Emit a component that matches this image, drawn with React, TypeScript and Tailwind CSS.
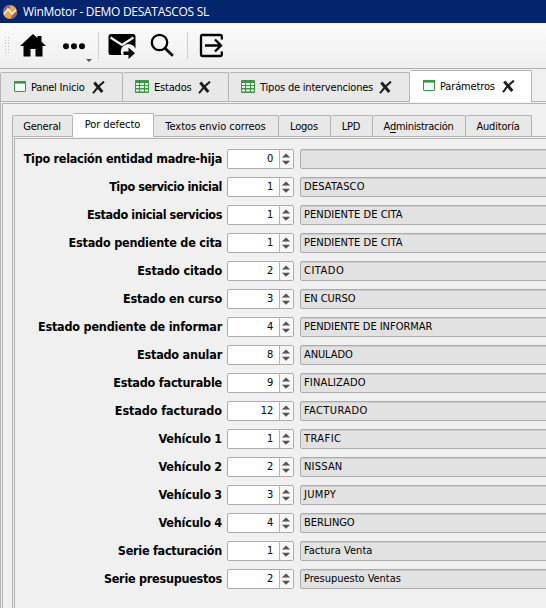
import type { ReactNode } from "react";

const rows = [
  { label: "Tipo relación entidad madre-hija", value: 0, text: "", labelTracking: "tracking-[-0.27px]", textTracking: "" },
  { label: "Tipo servicio inicial", value: 1, text: "DESATASCO", labelTracking: "tracking-[-0.44px]", textTracking: "tracking-[0.15px]" },
  { label: "Estado inicial servicios", value: 1, text: "PENDIENTE DE CITA", labelTracking: "tracking-[-0.4px]", textTracking: "tracking-[0.03px]" },
  { label: "Estado pendiente de cita", value: 1, text: "PENDIENTE DE CITA", labelTracking: "tracking-[-0.2px]", textTracking: "tracking-[0.03px]" },
  { label: "Estado citado", value: 2, text: "CITADO", labelTracking: "tracking-[-0.12px]", textTracking: "tracking-[0.5px]" },
  { label: "Estado en curso", value: 3, text: "EN CURSO", labelTracking: "tracking-[-0.15px]", textTracking: "tracking-[-0.05px]" },
  { label: "Estado pendiente de informar", value: 4, text: "PENDIENTE DE INFORMAR", labelTracking: "tracking-[-0.2px]", textTracking: "tracking-[-0.04px]" },
  { label: "Estado anular", value: 8, text: "ANULADO", labelTracking: "tracking-[-0.2px]", textTracking: "tracking-[-0.1px]" },
  { label: "Estado facturable", value: 9, text: "FINALIZADO", labelTracking: "tracking-[-0.2px]", textTracking: "tracking-[0.15px]" },
  { label: "Estado facturado", value: 12, text: "FACTURADO", labelTracking: "tracking-[-0.08px]", textTracking: "tracking-[0.4px]" },
  { label: "Vehículo 1", value: 1, text: "TRAFIC", labelTracking: "tracking-[-0.2px]", textTracking: "tracking-[0.45px]" },
  { label: "Vehículo 2", value: 2, text: "NISSAN", labelTracking: "tracking-[-0.2px]", textTracking: "tracking-[0.2px]" },
  { label: "Vehículo 3", value: 3, text: "JUMPY", labelTracking: "tracking-[-0.2px]", textTracking: "tracking-[0.35px]" },
  { label: "Vehículo 4", value: 4, text: "BERLINGO", labelTracking: "tracking-[-0.2px]", textTracking: "tracking-[-0.08px]" },
  { label: "Serie facturación", value: 1, text: "Factura Venta", labelTracking: "tracking-[-0.26px]", textTracking: "tracking-[0.05px]" },
  { label: "Serie presupuestos", value: 2, text: "Presupuesto Ventas", labelTracking: "tracking-[-0.26px]", textTracking: "tracking-[-0.03px]" },
];

const innerTabs: { name: ReactNode; width: string; active?: boolean }[] = [
  { name: "General", width: "w-[61px]" },
  { name: "Por defecto", width: "w-[81px] tracking-[-0.05px]", active: true },
  { name: "Textos envio correos", width: "w-[125px] tracking-[-0.02px]" },
  { name: "Logos", width: "w-[52px]" },
  { name: "LPD", width: "w-[42px]" },
  { name: <>A<span className="underline underline-offset-2">d</span>ministración</>, width: "w-[93px] tracking-[-0.3px]" },
  { name: "Auditoría", width: "w-[66px]" },
];

function WindowIcon() {
  return (
    <svg width="12" height="11" viewBox="0 0 12 11" className="mb-[2px] shrink-0">
      <rect x="0.5" y="0.5" width="11" height="10" rx="0.5" fill="#f4f8f4" stroke="#3c9447" />
      <path d="M0 0h12v2.6H0z" fill="#3c9447" />
    </svg>
  );
}

function GridIcon() {
  return (
    <svg width="14" height="13" viewBox="0 0 14 13" className="mb-[2px] shrink-0">
      <rect width="14" height="13" rx="1" fill="#3c9447" />
      <path d="M1 3h3v2H1zM5 3h4v2H5zM10 3h3v2h-3zM1 6h3v2H1zM5 6h4v2H5zM10 6h3v2h-3zM1 9.500h3v2H1zM5 9.500h4v2H5zM10 9.500h3v2h-3z" fill="#e6f2e6" />
    </svg>
  );
}

function CloseIcon() {
  return (
    <svg width="13" height="13" viewBox="0 0 13 13" className="shrink-0" fill="none" stroke="#1d1d1d">
      <path d="M2.300 1.600 10.300 10.900" strokeWidth="3" />
      <path d="M12 .6Q6 5 1 12.200" strokeWidth="2" />
    </svg>
  );
}

function OuterTab({ icon, name, className }: { icon: ReactNode; name: string; className: string }) {
  return (
    <div className={`flex h-[29px] shrink-0 items-center rounded-t-[2px] border-t border-r border-[#b4b4b4] bg-[#e8e8e8] ${className}`}>
      {icon}
      <span className="flex-1 pt-[2px] pl-[5px] whitespace-nowrap">{name}</span>
      <CloseIcon />
    </div>
  );
}

export default function App() {
  return (
    <div className="flex h-[608px] w-[546px] flex-col overflow-hidden bg-[#f0f0f0] font-['DejaVu_Sans_Condensed','DejaVu_Sans',sans-serif] text-[11px] leading-[14px] font-[stretch:condensed] tracking-[-0.2px] text-black">
      <header className="flex h-[23px] shrink-0 items-center gap-[6px] bg-[#04246e] pl-[3px] font-['Open_Sans',sans-serif] text-[12px] tracking-[-0.29px] text-white">
        <svg width="14" height="14" viewBox="0 0 14 14">
          <circle cx="7" cy="7" r="7" fill="#eba849" />
          <path d="M0 7a7 7 0 0 1 7-7v3L4.8 5.2 0 9zM14 7a7 7 0 0 1-7 7l2-4 3-4z" fill="#8b668b" />
          <path d="m1 9 4-5 4.2 5L13 5" fill="none" stroke="#fff3dd" strokeWidth="1.5" />
        </svg>
        <span className="whitespace-nowrap">WinMotor - DEMO DESATASCOS SL</span>
      </header>

      <div className="flex h-[46px] shrink-0 items-center border-b border-[#b2b2b2] bg-linear-to-b from-[#fbfbfb] to-[#efefef] pl-[5px]">
        <svg width="4" height="17" viewBox="0 0 4 17" fill="#bcbcbc">
          <path d="M0 0h1v1H0zM0 3h1v1H0zM0 6h1v1H0zM0 9h1v1H0zM0 12h1v1H0zM0 15h1v1H0zM3 0h1v1H3zM3 3h1v1H3zM3 6h1v1H3zM3 9h1v1H3zM3 12h1v1H3zM3 15h1v1H3z" />
        </svg>
        <svg width="26" height="23" viewBox="0 0 26 23" className="ml-[11px]">
          <path d="M13 0 17.500 4V2H21.500V7.600L26 12H22.500V22.500H15.500V15H10.500V22.500H3.500V12H0z" />
        </svg>
        <svg width="30" height="32" viewBox="0 0 30 32" className="ml-[17px]">
          <circle cx="3" cy="16.300" r="3" /><circle cx="11" cy="16.300" r="3" /><circle cx="19" cy="16.300" r="3" />
          <path d="M23 29h6l-3 3z" fill="#555" />
        </svg>
        <div className="ml-[5px] h-[27px] w-px bg-[#cfcfcf]" />
        <svg width="28" height="26" viewBox="0 0 28 26" className="ml-[9px]">
          <path d="M3 1h22a2.500 2.500 0 0 1 2.500 2.500V15.500A7.500 7.500 0 0 0 13.500 22H3A2.500 2.500 0 0 1 .5 19.500V3.500A2.500 2.500 0 0 1 3 1z" />
          <path d="M2.500 4.500 14 12 25.500 4.500" fill="none" stroke="#f6f6f6" strokeWidth="2.200" />
          <path d="M15.500 18.500h5v-4l6.500 5.700-6.500 5.800v-4h-5z" stroke="#f6f6f6" strokeWidth="2.500" paintOrder="stroke" />
        </svg>
        <svg width="25" height="25" viewBox="0 0 25 25" className="ml-[14px]" fill="none" stroke="#000">
          <circle cx="9.500" cy="9.500" r="7.700" strokeWidth="2.300" />
          <path d="m14.800 15 8 7.800" strokeWidth="2.800" />
        </svg>
        <div className="ml-[12px] h-[27px] w-px bg-[#cfcfcf]" />
        <svg width="25" height="25" viewBox="0 0 25 25" className="ml-[11px]" fill="none" stroke="#000" strokeWidth="2.300">
          <path d="M22.800 6.500V3.500a1.500 1.500 0 0 0-1.500-1.500H3.500A1.500 1.500 0 0 0 2 3.500v18A1.500 1.500 0 0 0 3.500 23h17.800a1.500 1.500 0 0 0 1.500-1.500v-3M6 12.500h16M16 6.500l6 6-6 6" />
        </svg>
      </div>

      <nav className="z-10 mt-px -mb-px flex h-[32px] shrink-0 items-start">
        <OuterTab icon={<WindowIcon />} name="Panel Inicio" className="mt-[2px] w-[123px] border-l pr-[17px] pl-[13px]" />
        <OuterTab icon={<GridIcon />} name="Estados" className="mt-[2px] w-[106px] pr-[17px] pl-[12px]" />
        <OuterTab icon={<GridIcon />} name="Tipos de intervenciones" className="mt-[2px] w-[181px] pr-[17px] pl-[12px]" />
        <div className="flex h-[32px] w-[122px] items-center rounded-t-[2px] border-t border-r border-[#b4b4b4] bg-white pr-[16px] pb-px pl-[13px]">
          <WindowIcon />
          <span className="flex-1 pt-[2px] pl-[5px] tracking-[-0.15px]">Parámetros</span>
          <CloseIcon />
        </div>
      </nav>

      <div className="flex w-[560px] flex-1 flex-col border-t border-l border-[#b4b4b4] pt-px pl-px">
        <main className="flex flex-1 flex-col border-t border-l border-[#b4b4b4] pl-[9px]">
          <div className="z-10 mt-[9px] -mb-px flex h-[24px] shrink-0 items-start">
            {innerTabs.map((tab, i) => (
              <div
                key={i}
                className={`flex shrink-0 items-center justify-center rounded-t-[2px] border-t border-r border-[#b4b4b4] pr-px whitespace-nowrap ${tab.width} ${i === 0 ? "border-l" : ""} ${tab.active ? "h-[24px] bg-white pb-px" : "mt-[2px] h-[21px] bg-[#e8e8e8] pt-[2px]"}`}
              >
                <span>{tab.name}</span>
              </div>
            ))}
          </div>
          <div className="flex flex-1 flex-col border-t border-l border-[#b4b4b4] pt-px pl-px">
            <section className="flex flex-1 flex-col gap-2 border-t border-l border-[#b4b4b4] pt-[10px]">
              {rows.map((row) => (
                <div key={row.label} className="flex h-5 shrink-0 items-center">
                  <label className={`w-[207px] text-right text-[12.500px] font-bold whitespace-nowrap ${row.labelTracking}`}>{row.label}</label>
                  <div className="ml-[5px] flex h-5 w-[67px] rounded-[2px] border border-[#acacac] bg-white">
                    <span className="flex-1 pt-[2px] pr-[6px] text-right">{row.value}</span>
                    <svg width="14" height="18" viewBox="0 0 14 18" className="border-l border-[#b4b4b4] bg-[#f7f7f7]" fill="#555">
                      <path d="M6.500 3 11 7.500H2zM6.500 15.300l4.500-4.500H2z" />
                    </svg>
                  </div>
                  <div className={`ml-[6px] h-5 w-[260px] rounded-[2px] border border-[#acacac] bg-[#e2e2e2] pt-[2px] pl-[3px] shadow-[inset_0_1px_0_#cfcfcf] ${row.textTracking}`}>
                    {row.text}
                  </div>
                </div>
              ))}
            </section>
          </div>
        </main>
      </div>
    </div>
  );
}
